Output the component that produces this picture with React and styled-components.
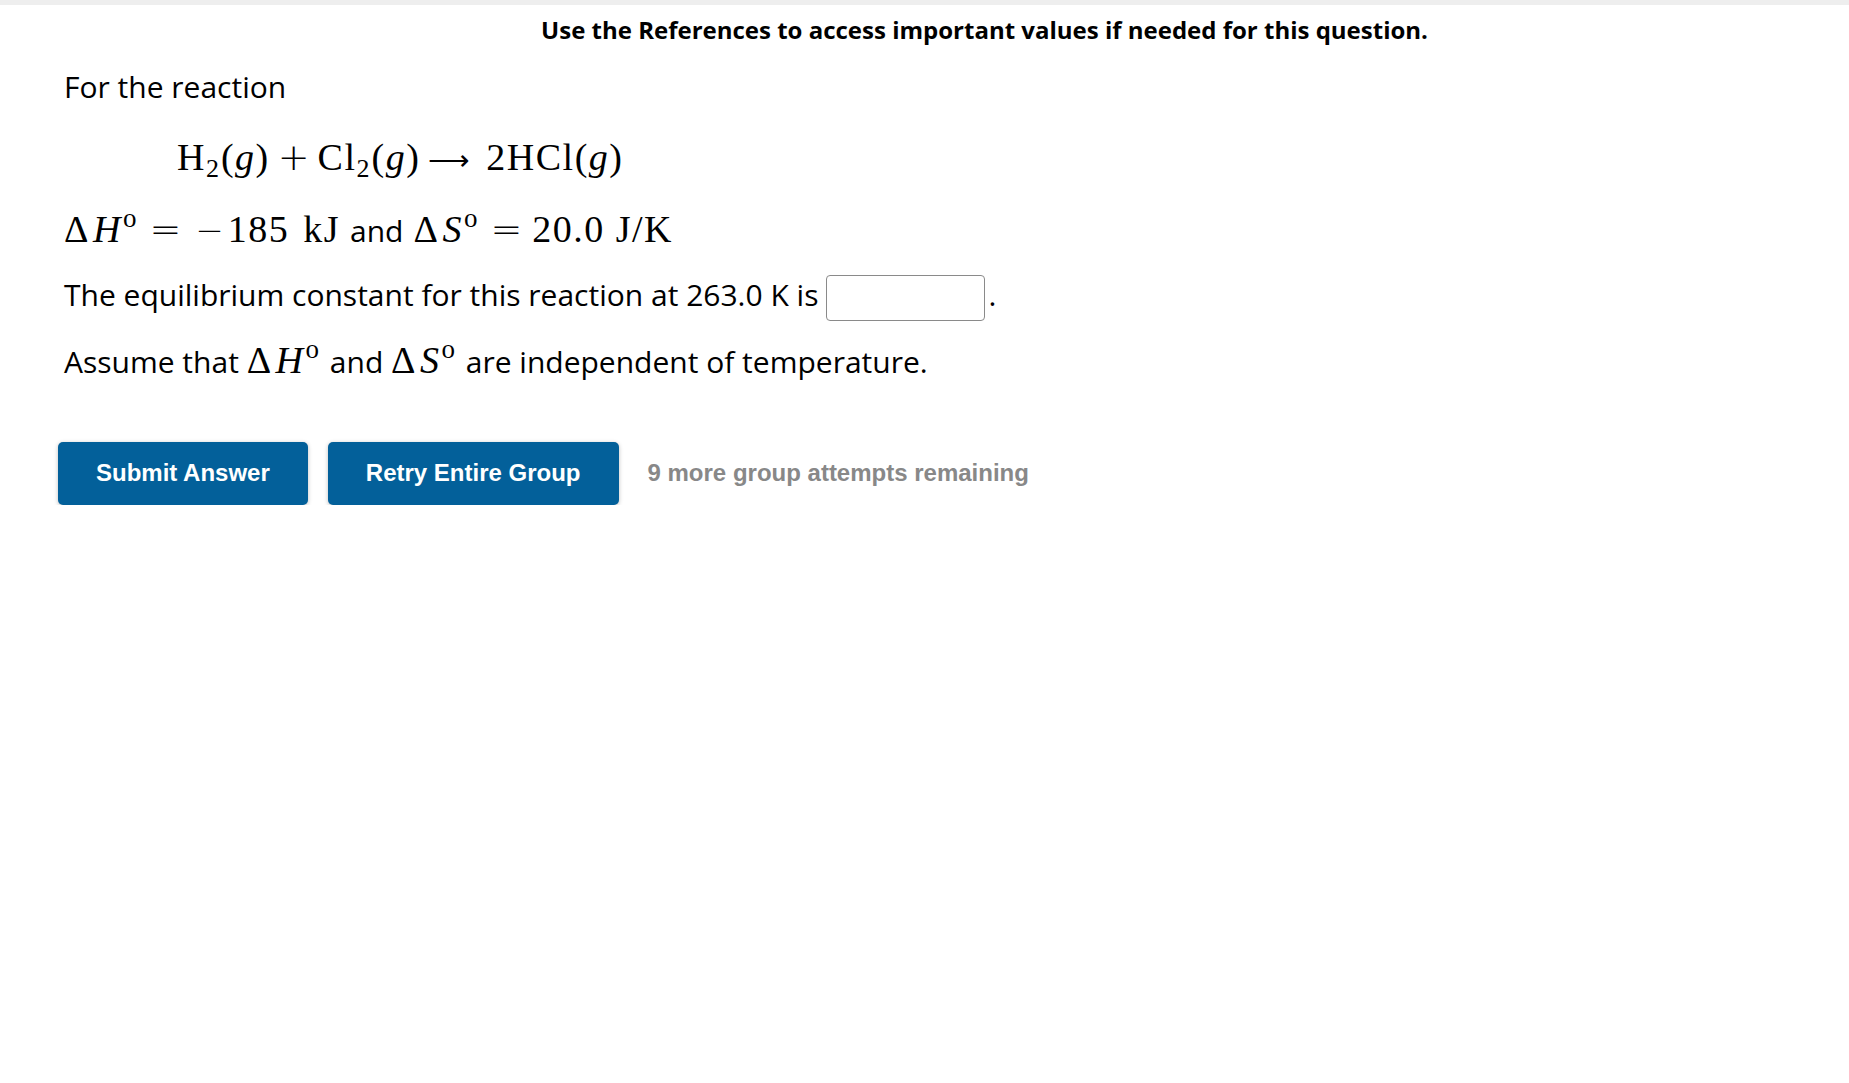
import React from 'react';
import styled, { createGlobalStyle } from 'styled-components';

const GlobalStyle = createGlobalStyle`
  body {
    margin: 0;
    background: #fff;
    font-family: 'Open Sans', 'Noto Sans', sans-serif;
    color: #000;
  }
`;

const TopBar = styled.div`
  height: 5px;
  background-color: #eeeeee;
`;

const Notice = styled.div`
  padding: 10px 0 0 120px;
  text-align: center;
  font-size: 24px;
  font-weight: 700;
  line-height: 30px;
`;

const Question = styled.div`
  padding: 0 0 0 64px;
`;

const Para = styled.p`
  margin: ${({ top }) => top || 0}px 0 0;
  font-size: 30px;
  line-height: ${({ lh }) => lh || 40}px;
  white-space: nowrap;
`;

const MathLine = styled.div`
  margin: ${({ top }) => top || 0}px 0 0 ${({ indent }) => indent || 0}px;
  font-family: 'Liberation Serif', 'DejaVu Serif', serif;
  font-size: 38px;
  line-height: 44px;
  white-space: nowrap;
`;

// serif glyphs (numbers, letters, brackets)
const M = styled.span`
  font-family: 'Liberation Serif', 'DejaVu Serif', serif;
  font-size: 38px;
  font-style: ${({ italic }) => (italic ? 'italic' : 'normal')};
  letter-spacing: 1.5px;
  margin: 0 ${({ right }) => right || 0}px 0 ${({ left }) => left || 0}px;
  white-space: pre;
`;

// thin operators: + = − and the reaction arrow
const Op = styled.span`
  font-family: 'DejaVu Sans', sans-serif;
  font-weight: 200;
  font-size: ${({ size }) => size || 38}px;
  margin: 0 ${({ gap }) => gap || 0}px;
`;

const Sub = styled.span`
  font-family: 'Liberation Serif', 'DejaVu Serif', serif;
  font-size: 26px;
  vertical-align: -0.25em;
  line-height: 0;
  margin-right: 2px;
`;

const Sup = styled.span`
  font-family: 'Liberation Serif', 'DejaVu Serif', serif;
  font-size: 27px;
  vertical-align: 0.55em;
  line-height: 0;
  margin: 0 3px 0 1px;
`;

const Word = styled.span`
  font-family: 'Open Sans', 'Noto Sans', sans-serif;
  font-size: 30px;
  margin: 0 ${({ gap }) => gap || 0}px;
`;

const AnswerBox = styled.input`
  width: 159px;
  height: 46px;
  box-sizing: border-box;
  margin: 0 3px 0 8px;
  vertical-align: middle;
  border: 1.5px solid #8a8a8a;
  border-radius: 4px;
  background: #fff;
  outline: none;
`;

const Actions = styled.div`
  display: flex;
  align-items: center;
  gap: 20px;
  margin-top: 58px;
  padding-left: 58px;
`;

const ActionButton = styled.button`
  height: 63px;
  padding: 0 38px;
  border: none;
  border-radius: 5px;
  background-color: #03609a;
  color: #fff;
  font-family: 'Liberation Sans', Arial, sans-serif;
  font-size: 24px;
  font-weight: 700;
  box-shadow: 0 1px 4px rgba(0, 0, 0, 0.25);
  cursor: pointer;
`;

const Attempts = styled.span`
  margin-left: 9px;
  font-family: 'Liberation Sans', Arial, sans-serif;
  font-size: 24px;
  font-weight: 700;
  color: #888888;
`;

function Delta({ symbol }) {
  return (
    <>
      <M right={3}>Δ</M>
      <M italic>{symbol}</M>
      <Sup>o</Sup>
    </>
  );
}

export default function App() {
  return (
    <>
      <GlobalStyle />
      <TopBar />
      <Notice>Use the References to access important values if needed for this question.</Notice>
      <Question>
        <Para top={22}>For the reaction</Para>
        <MathLine indent={113} top={28}>
          <M>H</M>
          <Sub>2</Sub>
          <M>(</M>
          <M italic>g</M>
          <M>)</M>
          <Op gap={8}>+</Op>
          <M>Cl</M>
          <Sub>2</Sub>
          <M>(</M>
          <M italic>g</M>
          <M>)</M>
          <Op size={29} gap={8}>⟶</Op>
          <M left={8}>2HCl(</M>
          <M italic>g</M>
          <M>)</M>
        </MathLine>
        <MathLine top={25}>
          <Delta symbol="H" />
          <Op gap={10}>=</Op>
          <Op size={34} gap={4}>−</Op>
          <M>185</M>
          <M left={14}>kJ</M>
          <Word gap={10}>and</Word>
          <Delta symbol="S" />
          <Op gap={10}>=</Op>
          <M>20.0 J/K</M>
        </MathLine>
        <Para top={18} lh={48}>
          The equilibrium constant for this reaction at 263.0 K is
          <AnswerBox type="text" aria-label="answer" />.
        </Para>
        <Para top={17} lh={44}>
          Assume that <Delta symbol="H" /> and <Delta symbol="S" /> are independent of temperature.
        </Para>
      </Question>
      <Actions>
        <ActionButton>Submit Answer</ActionButton>
        <ActionButton>Retry Entire Group</ActionButton>
        <Attempts>9 more group attempts remaining</Attempts>
      </Actions>
    </>
  );
}
